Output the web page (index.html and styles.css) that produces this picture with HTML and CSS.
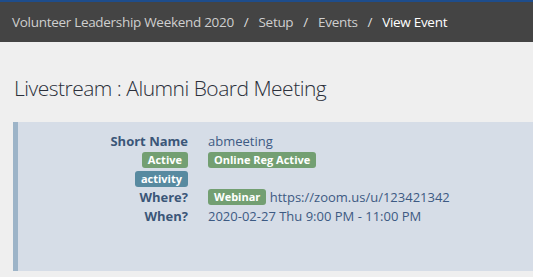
FILE: index.html
```html
<!DOCTYPE html>
<html lang="en">
<head>
    <meta charset="UTF-8">
    <meta name="viewport" content="width=device-width, initial-scale=1.0">
    <title>View Event</title>
    <link rel="stylesheet" href="styles.css">
</head>
<body>

    <!-- Top bar with breadcrumbs -->
    <div class="topbar">
        <ol class="breadcrumb">
            <li><a href="#">Volunteer Leadership Weekend 2020</a></li>
            <li><a href="#">Setup</a></li>
            <li><a href="#">Events</a></li>
            <li class="current">View Event</li>
        </ol>
    </div>

    <h1 class="page-title">Livestream : Alumni Board Meeting</h1>

    <div class="panel">
        <dl class="details">
            <dt>Short Name</dt>
            <dd>abmeeting</dd>

            <dt><span class="label label-green">Active</span></dt>
            <dd><span class="label label-green">Online Reg Active</span></dd>

            <dt><span class="label label-blue">activity</span></dt>
            <dd></dd>

            <dt>Where?</dt>
            <dd><span class="label label-green">Webinar</span> https://zoom.us/u/123421342</dd>

            <dt>When?</dt>
            <dd>2020-02-27 Thu 9:00 PM - 11:00 PM</dd>
        </dl>
    </div>

</body>
</html>
```

FILE: styles.css
```css
body {
    font-family: "Open Sans", Arial, sans-serif;
    background: #efefef;
    color: #333;
    margin: 0;
    padding: 0;
}
.topbar {
    background: #444444;
    border-top: 2px solid #1e4d8c;
    height: 40px;
    display: flex;
    align-items: center;
    padding: 0 12px;
}
.breadcrumb {
    list-style: none;
    margin: 0;
    padding: 0;
    display: flex;
    font-size: 13.5px;
    letter-spacing: -0.3px;
}
.breadcrumb li + li:before {
    content: "/";
    color: #ddd;
    padding: 0 10px;
}
.breadcrumb a {
    color: #cfcfcf;
    text-decoration: none;
}
.breadcrumb .current {
    color: #fff;
}
.page-title {
    font-size: 21px;
    font-weight: 300;
    letter-spacing: -0.5px;
    color: #2b2f3a;
    margin: 31px 0 19px 14px;
    line-height: 30px;
}
.panel {
    margin-left: 13px;
    background: #d6dde7;
    border-left: 5px solid #9db4c8;
    height: 149px;
    box-sizing: border-box;
    padding: 10px 10px;
}
.details {
    display: grid;
    grid-template-columns: 160px 1fr;
    column-gap: 20px;
    margin: 0;
    font-size: 13px;
    line-height: 18.8px;
}
dt {
    text-align: right;
    font-weight: bold;
    color: #3b5678;
}
dd {
    margin: 0;
    color: #3d5a83;
}
.label {
    display: inline-block;
    font-size: 11px;
    font-weight: bold;
    line-height: 12px;
    color: #fff;
    padding: 2px 6px;
    border-radius: 3px;
    vertical-align: 1px;
}
.label-green {
    background: #739f72;
}
.label-blue {
    background: #588aa0;
}
```
